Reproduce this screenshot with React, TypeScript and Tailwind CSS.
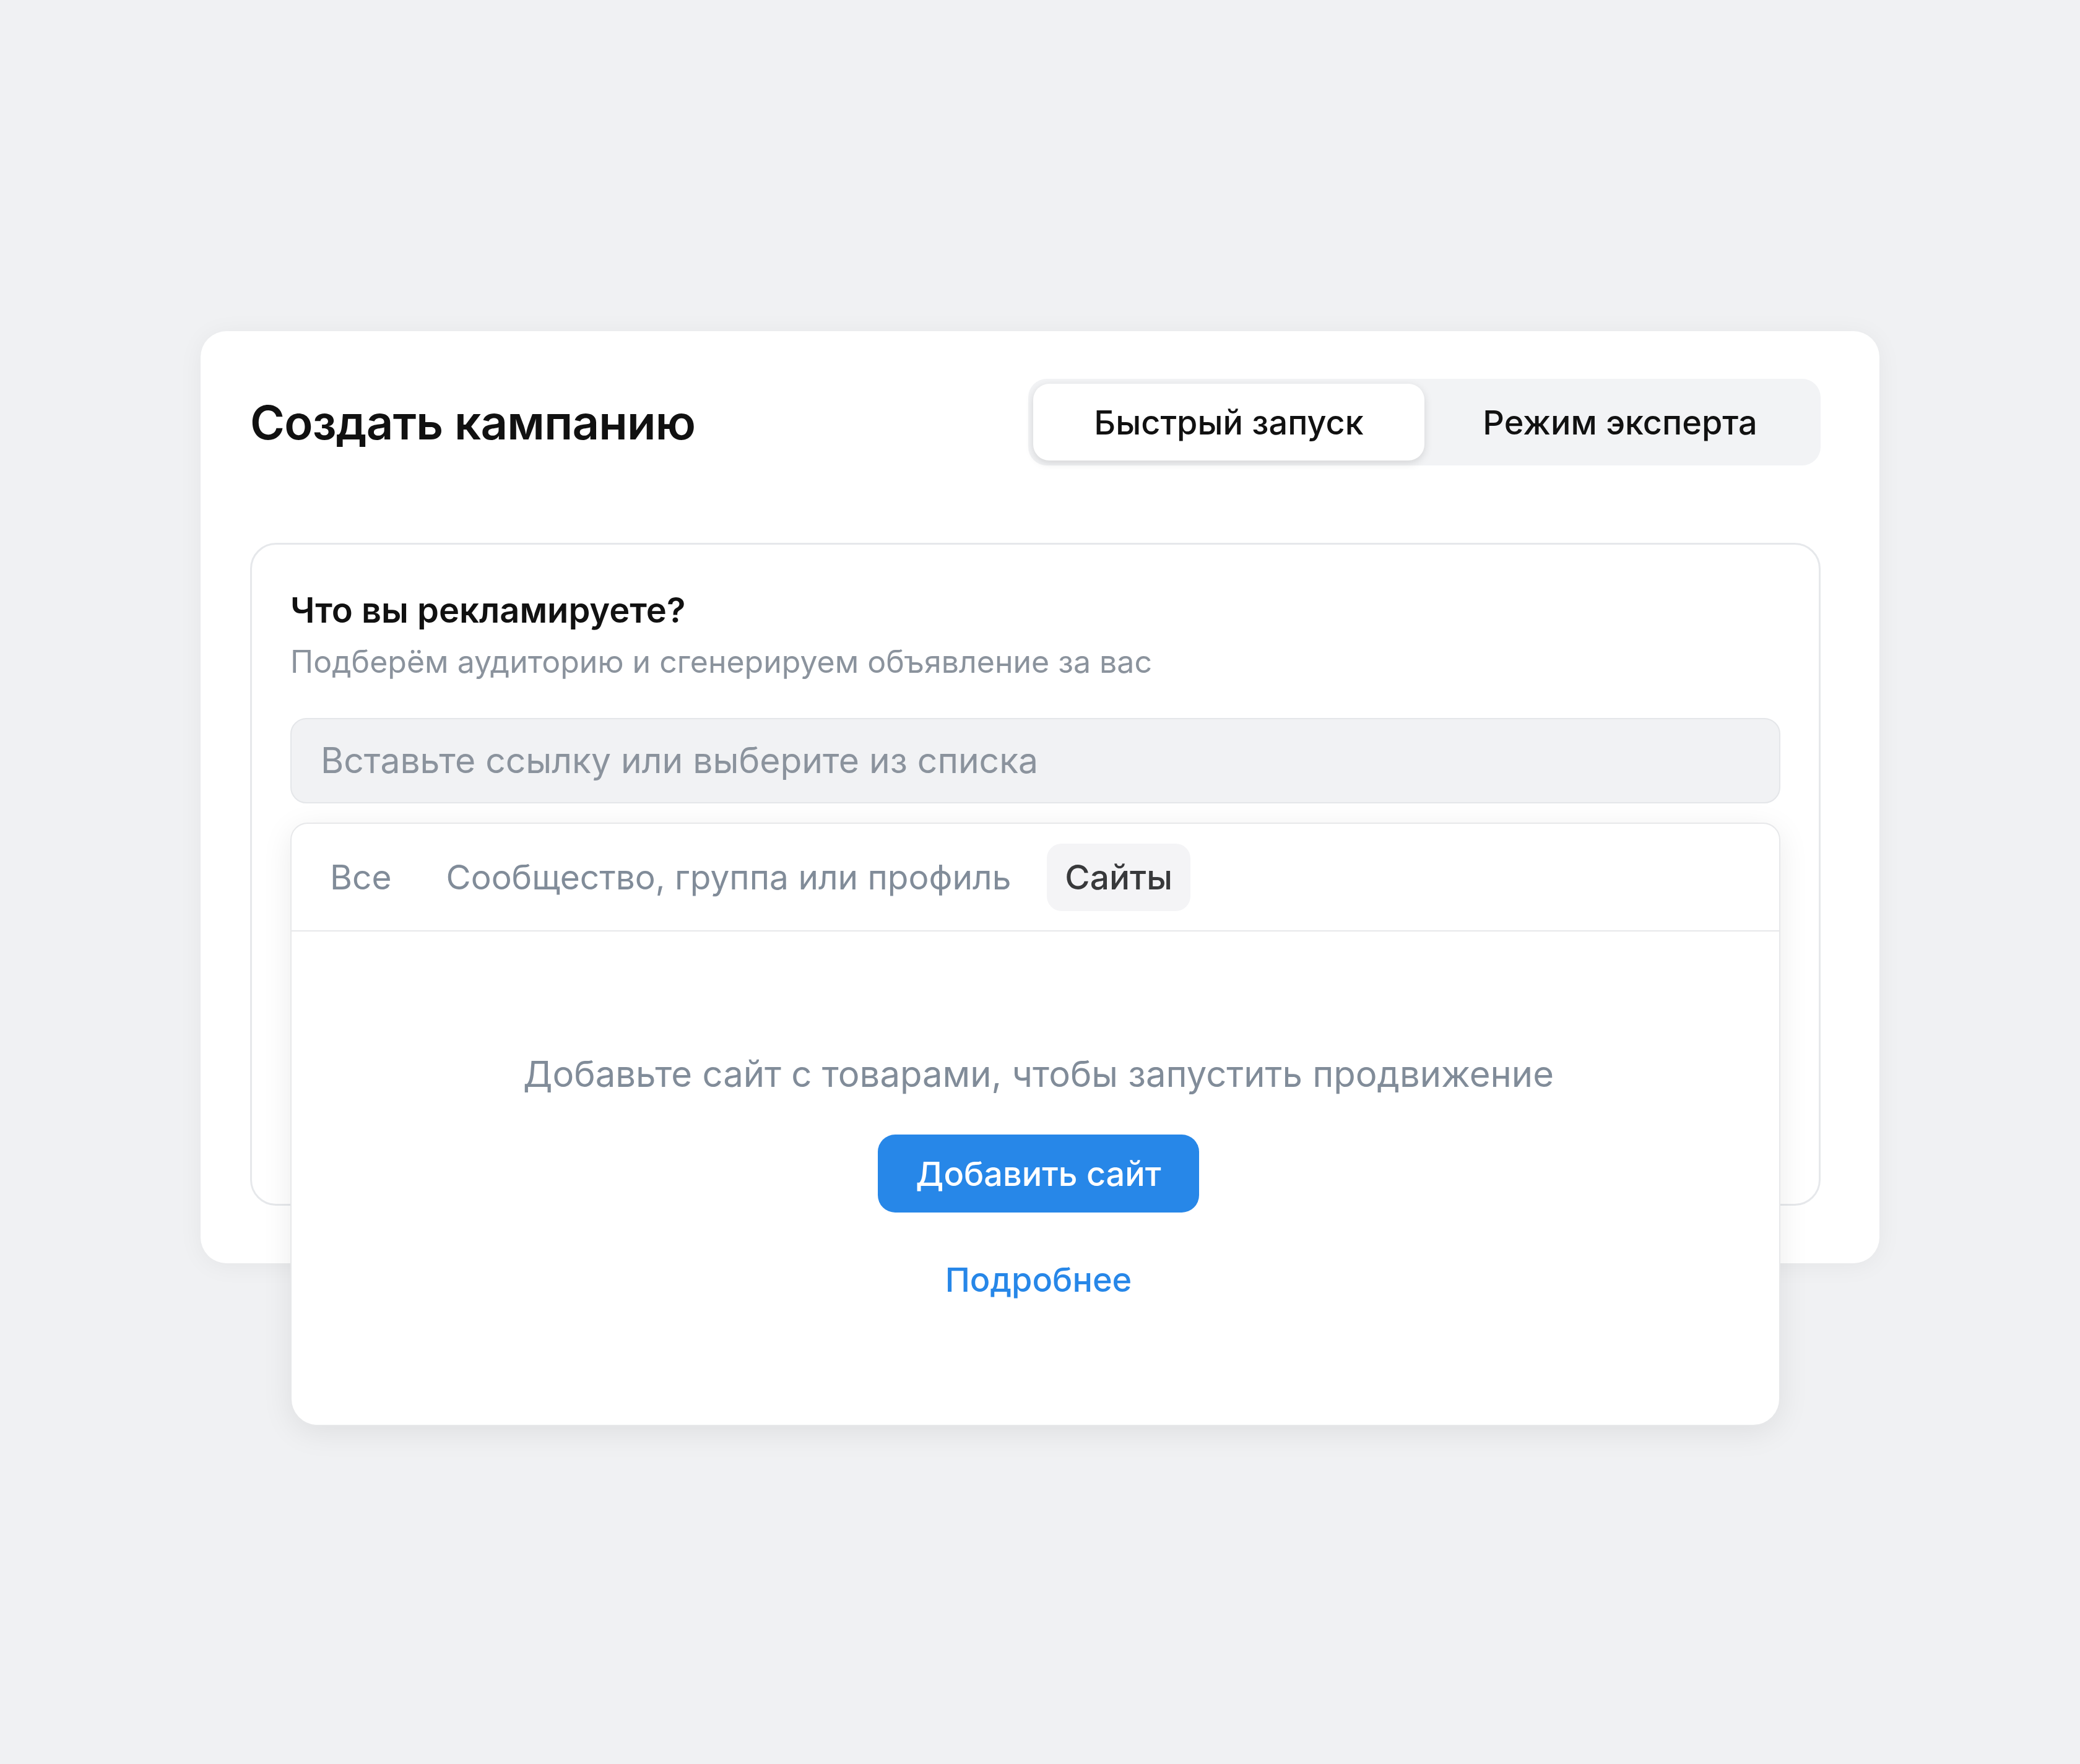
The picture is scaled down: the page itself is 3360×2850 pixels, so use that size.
import React from "react";

export default function App() {
  return (
    <div
      className="w-[3360px] min-h-[2850px] bg-[#f0f1f3] pt-[535px] pl-[324px] antialiased"
      style={{ fontFamily: "Inter, 'Noto Sans', 'Liberation Sans', sans-serif" }}
    >
      <div className="w-[2712px] h-[1506px] rounded-[42px] bg-white shadow-[0_4px_40px_rgba(0,0,0,0.05)] pt-[77px] pl-[80px] pr-[95px]">
        <div className="flex items-center justify-between h-[140px]">
          <h1 className="text-[76px] font-semibold leading-none text-[#111] tracking-[-0.01em]">
            Создать кампанию
          </h1>
          <div className="grid grid-cols-2 w-[1280px] h-[140px] p-[8px] rounded-[30px] bg-[#f2f3f5]">
            <button className="rounded-[26px] bg-white shadow-[0_4px_14px_rgba(0,0,0,0.13)] text-[54px] font-medium text-[#111]">
              Быстрый запуск
            </button>
            <button className="text-[54px] font-medium text-[#111]">Режим эксперта</button>
          </div>
        </div>

        <section className="mt-[125px] h-[1071px] rounded-[42px] border-[3px] border-[#e6e8eb] px-[62px] pt-[73px]">
          <h2 className="text-[56px] font-semibold leading-[66px] text-[#111]">Что вы рекламируете?</h2>
          <p className="mt-[20px] text-[50px] leading-[60px] text-[#8b939d]">
            Подберём аудиторию и сгенерируем объявление за вас
          </p>

          <div className="relative mt-[61px]">
            <div className="h-[138px] rounded-[26px] border-[2px] border-[#e4e6e9] bg-[#f1f2f4] flex items-center pl-[47px] text-[57px] text-[#8b939d]">
              Вставьте ссылку или выберите из списка
            </div>

            <div className="absolute left-0 right-0 top-[169px] h-[975px] rounded-t-[28px] rounded-b-[44px] bg-white border-[2px] border-[#e7e8ea] shadow-[0_10px_50px_rgba(0,0,0,0.08)] flex flex-col">
              <div className="flex items-center gap-[28px] h-[174px] px-[32px] border-b-[2px] border-[#e7e8ea] shrink-0">
                <span className="h-[109px] flex items-center px-[30px] rounded-[24px] text-[55px] text-[#818c99]">
                  Все
                </span>
                <span className="h-[109px] flex items-center px-[30px] rounded-[24px] text-[55px] text-[#818c99]">
                  Сообщество, группа или профиль
                </span>
                <span className="h-[109px] flex items-center px-[29px] rounded-[24px] bg-[#f4f4f6] text-[55px] font-medium text-[#38393b]">
                  Сайты
                </span>
              </div>

              <div className="flex-1 flex flex-col items-center pt-[195px] pl-[10px]">
                <p className="text-[58px] leading-[70px] text-[#818c99]">
                  Добавьте сайт с товарами, чтобы запустить продвижение
                </p>
                <button className="mt-[63px] h-[126px] px-[61px] rounded-[28px] bg-[#2787e8] text-white text-[54px] font-medium">
                  Добавить сайт
                </button>
                <a className="mt-[77px] text-[54px] leading-[64px] font-medium text-[#2787e8]">Подробнее</a>
              </div>
            </div>
          </div>
        </section>
      </div>
    </div>
  );
}
